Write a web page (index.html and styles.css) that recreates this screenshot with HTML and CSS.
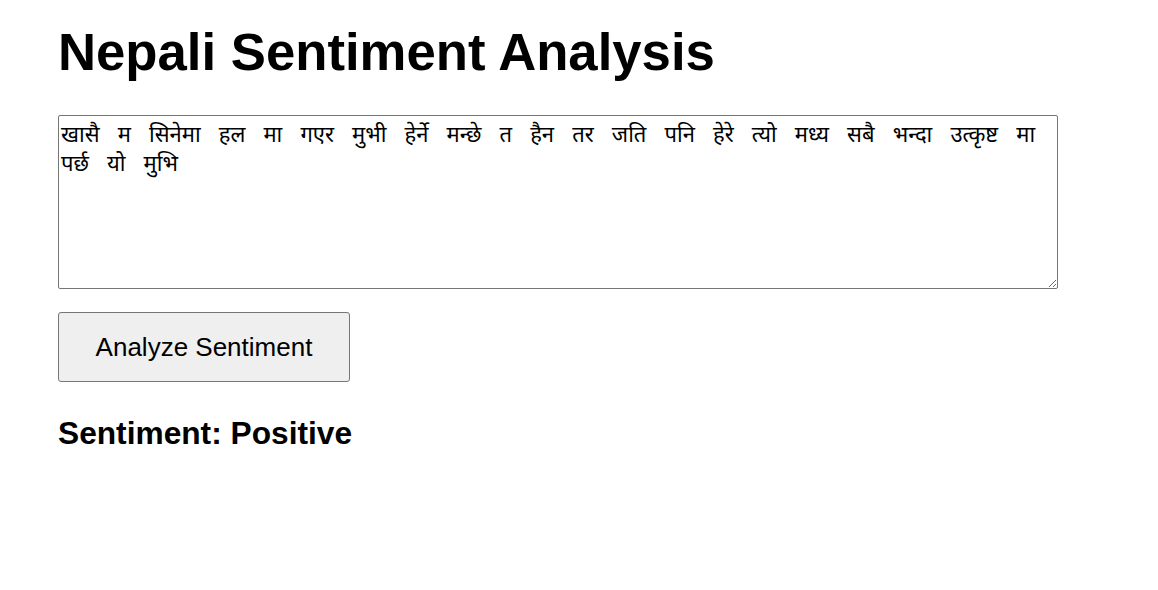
FILE: index.html
```html
<!DOCTYPE html>
<html lang="ne">
<head>
<meta charset="utf-8">
<title>Nepali Sentiment Analysis</title>
<link rel="stylesheet" href="styles.css">
</head>
<body>
<main class="page">
  <h1 class="title">Nepali Sentiment Analysis</h1>
  <textarea class="input" spellcheck="false">खासै म सिनेमा हल मा गएर मुभी हेर्ने मन्छे त हैन तर जति पनि हेरे त्यो मध्य सबै भन्दा उत्कृष्ट मा पर्छ यो मुभि</textarea>
  <button class="analyze" type="button">Analyze Sentiment</button>
  <h2 class="result">Sentiment: Positive</h2>
</main>
</body>
</html>
```

FILE: styles.css
```css
html, body {
  margin: 0;
  padding: 0;
  background: #ffffff;
}

.page {
  display: flex;
  flex-direction: column;
  align-items: flex-start;
  padding: 21px 58px;
  font-family: "Liberation Sans", Arial, sans-serif;
  color: #000;
}

.title {
  margin: 0 0 33px;
  font-size: 52.7px;
  font-weight: bold;
  line-height: normal;
}

.input {
  display: block;
  box-sizing: border-box;
  width: 1000px;
  height: 174px;
  margin: 0;
  padding: 6px 2px;
  border: 1px solid #767676;
  border-radius: 2px;
  font-family: "Noto Sans Devanagari", Mangal, "Noto Sans", "Liberation Sans", sans-serif;
  font-size: 22px;
  line-height: 29px;
  word-spacing: 12.4px;
  color: #000;
  resize: both;
}

.analyze {
  box-sizing: border-box;
  width: 292px;
  height: 70px;
  margin: 23px 0 0;
  padding: 0;
  background: #efefef;
  border: 1px solid #767676;
  border-radius: 3px;
  font-family: "Liberation Sans", Arial, sans-serif;
  font-size: 26px;
  color: #000;
}

.result {
  margin: 33px 0 0;
  font-size: 31.7px;
  font-weight: bold;
  line-height: normal;
}
```
